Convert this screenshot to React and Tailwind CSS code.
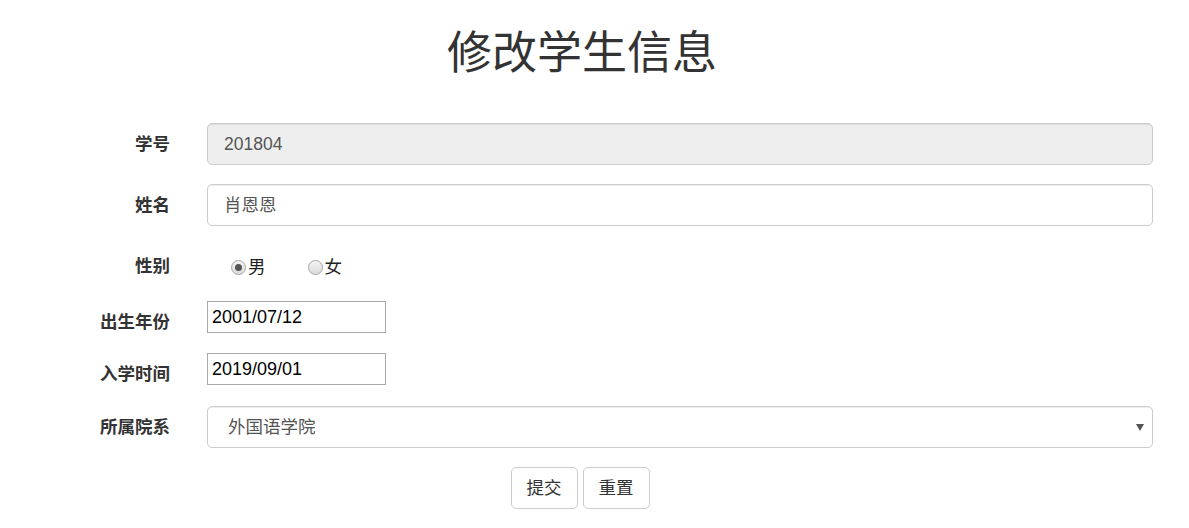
const font = { fontFamily: '"Liberation Sans", "Noto Sans CJK SC", sans-serif' };

function Label({ children }) {
  return (
    <div className="w-[170px] shrink-0 pt-[9px] text-right text-[17.5px] font-bold leading-[25px] text-[#333]">
      {children}
    </div>
  );
}

function Radio({ checked, label, className }) {
  return (
    <label className={`flex items-center ${className}`}>
      <span className="flex h-[15px] w-[15px] items-center justify-center rounded-full border border-[#a6a6a6] bg-gradient-to-b from-[#f4f4f4] to-[#dcdcdc]">
        {checked && <span className="h-[7px] w-[7px] rounded-full bg-[#555]" />}
      </span>
      <span className="ml-[2px] text-[17.5px] leading-[25px] text-[#222]">{label}</span>
    </label>
  );
}

export default function App() {
  return (
    <div className="min-h-[528px] w-[1189px] bg-white" style={font}>
      <div className="w-[1164px]">
        <h1 className="pt-[29px] text-center text-[45px] font-normal leading-[49px] text-[#333]">修改学生信息</h1>
      </div>

      <form className="mt-[45px] flex flex-col pr-[36px]">
        <div className="flex items-start gap-[37px]">
          <Label>学号</Label>
          <div className="flex h-[42px] flex-1 items-center rounded-[5px] border border-[#ccc] bg-[#eee] px-[16px] text-[17.5px] text-[#555] shadow-[inset_0_1px_1px_rgba(0,0,0,0.075)]">
            201804
          </div>
        </div>

        <div className="mt-[19px] flex items-start gap-[37px]">
          <Label>姓名</Label>
          <div className="flex h-[42px] flex-1 items-center rounded-[5px] border border-[#ccc] bg-white px-[16px] text-[17.5px] text-[#555] shadow-[inset_0_1px_1px_rgba(0,0,0,0.075)]">
            肖恩恩
          </div>
        </div>

        <div className="mt-[19px] flex h-[37px] items-start gap-[37px]">
          <Label>性别</Label>
          <div className="flex items-center pl-[24px] pt-[10px]">
            <Radio checked label="男" />
            <Radio label="女" className="ml-[42px]" />
          </div>
        </div>

        <div className="mt-[19px] flex items-start gap-[37px]">
          <Label>出生年份</Label>
          <div className="flex h-[32px] w-[179px] items-center border border-[#a9a9a9] pl-[4px] text-[18px] text-black">
            2001/07/12
          </div>
        </div>

        <div className="mt-[18px] flex items-start gap-[37px]">
          <Label>入学时间</Label>
          <div className="flex h-[32px] w-[179px] items-center border border-[#a9a9a9] pl-[4px] text-[18px] text-black">
            2019/09/01
          </div>
        </div>

        <div className="mt-[19px] flex items-start gap-[37px]">
          <Label>所属院系</Label>
          <div className="flex h-[42px] flex-1 items-center justify-between rounded-[5px] border border-[#ccc] bg-white pl-[20px] pr-[8px] text-[17.5px] text-[#555] shadow-[inset_0_1px_1px_rgba(0,0,0,0.075)]">
            <span>外国语学院</span>
            <svg width="8" height="7" viewBox="0 0 8 7" className="mt-[1px]">
              <path d="M0 0 H8 L4 7 Z" fill="#555" />
            </svg>
          </div>
        </div>
      </form>

      <div className="mt-[19px] flex w-[1160px] justify-center gap-[5px]">
        <button className="h-[42px] rounded-[5px] border border-[#ccc] bg-white px-[15px] text-[17.5px] text-[#333]">提交</button>
        <button className="h-[42px] rounded-[5px] border border-[#ccc] bg-white px-[15px] text-[17.5px] text-[#333]">重置</button>
      </div>
    </div>
  );
}
